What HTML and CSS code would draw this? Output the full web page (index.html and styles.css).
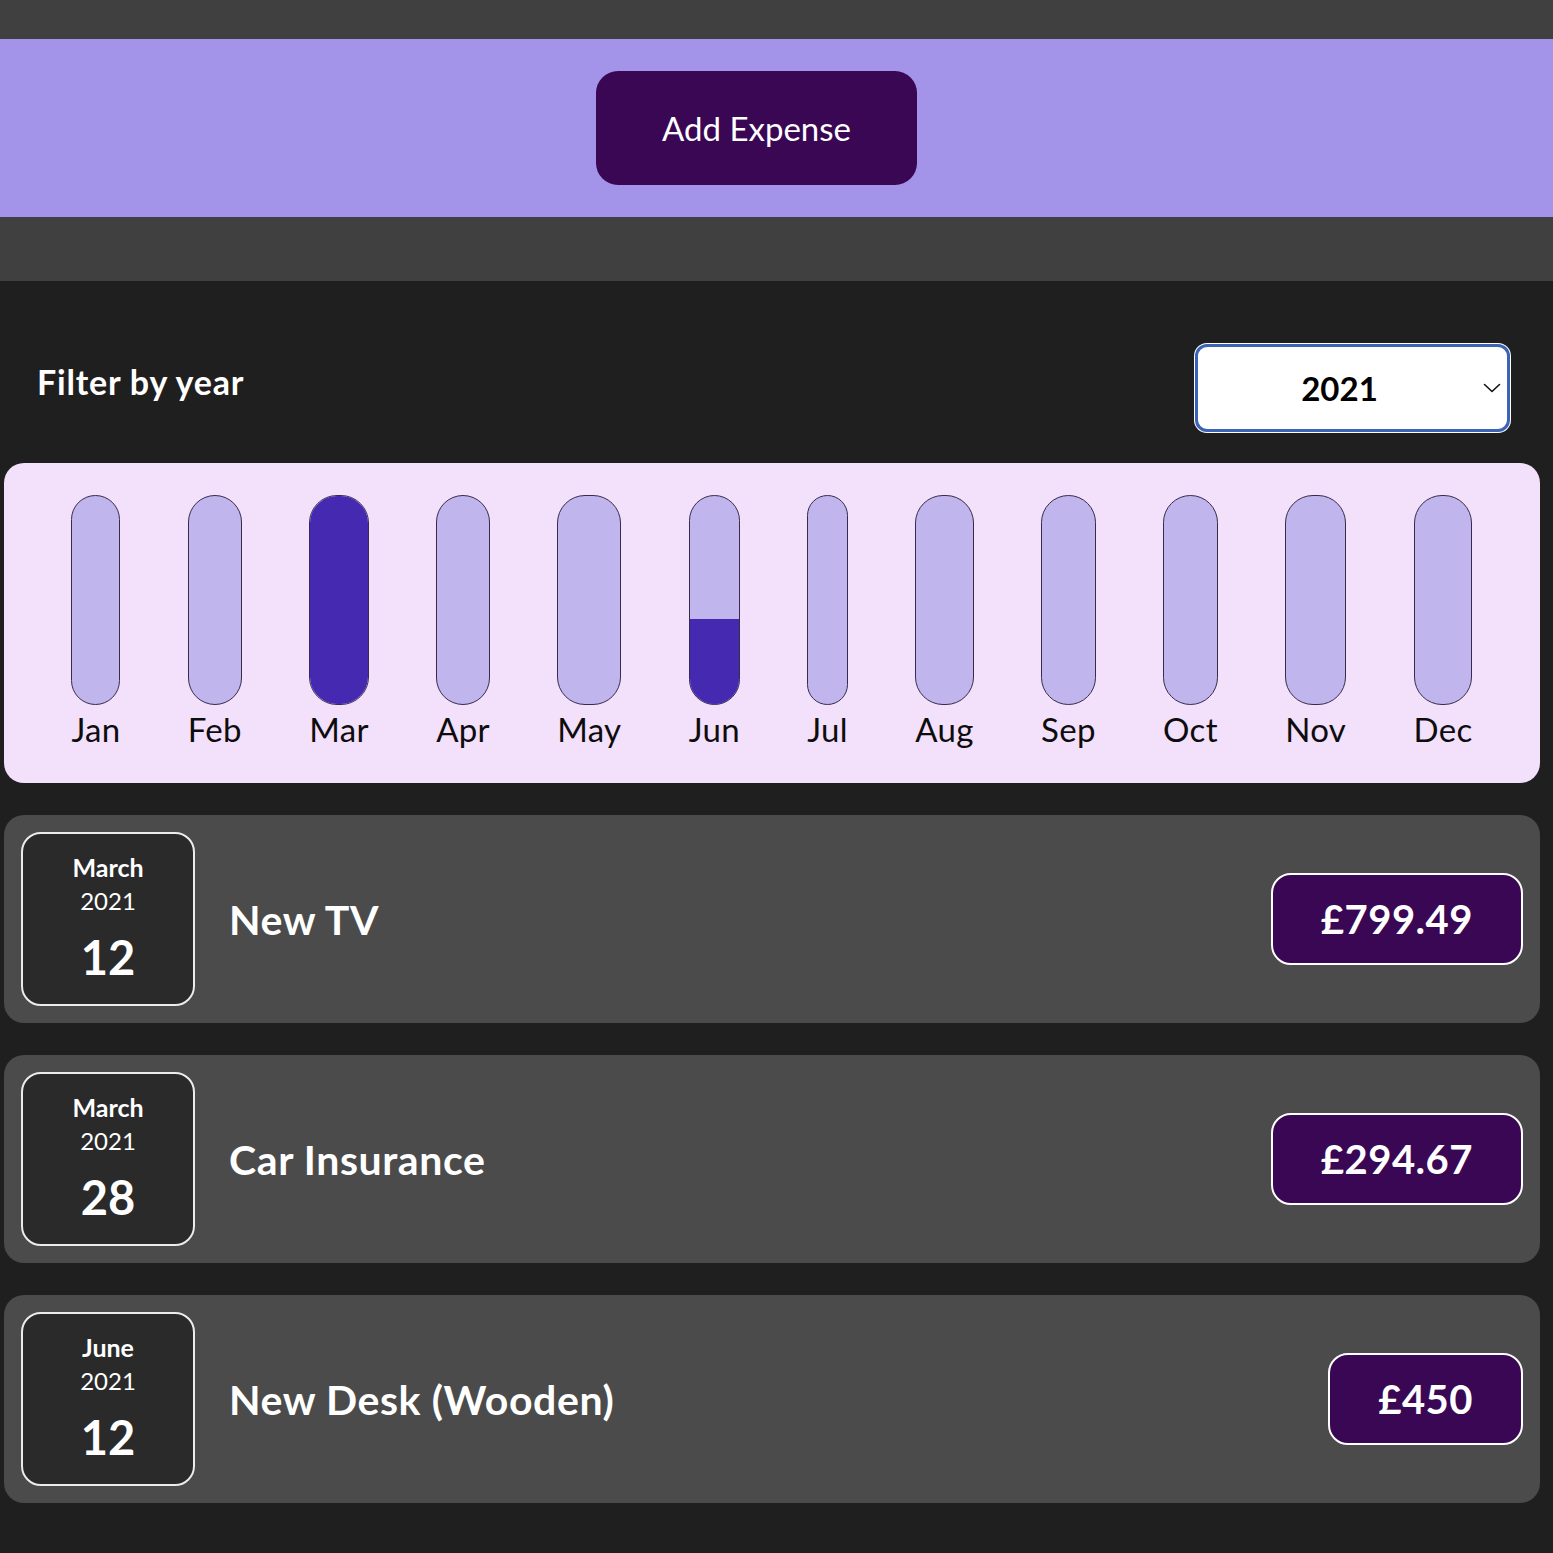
FILE: index.html
```html
<!DOCTYPE html>
<html lang="en">
<head>
<meta charset="utf-8">
<title>Expenses</title>
<link rel="stylesheet" href="styles.css">
</head>
<body>
<header class="top">
  <div class="new-expense">
    <button class="add-btn" type="button">Add Expense</button>
  </div>
</header>
<main class="expenses">
  <div class="filter">
    <label class="filter-label" for="year">Filter by year</label>
    <div class="select-wrap">
      <select id="year" class="year-select">
        <option>2022</option>
        <option selected>2021</option>
        <option>2020</option>
        <option>2019</option>
      </select>
      <svg class="chev" width="18" height="10" viewBox="0 0 18 10" aria-hidden="true"><path d="M1.5 1.5 L9 8.5 L16.5 1.5" fill="none" stroke="#111" stroke-width="1.6" stroke-linecap="round" stroke-linejoin="round"/></svg>
    </div>
  </div>

  <div class="chart">
    <div class="chart-col"><div class="bar"><div class="fill" style="height:0%"></div></div><div class="bar-label">Jan</div></div>
    <div class="chart-col"><div class="bar"><div class="fill" style="height:0%"></div></div><div class="bar-label">Feb</div></div>
    <div class="chart-col"><div class="bar"><div class="fill" style="height:100%"></div></div><div class="bar-label">Mar</div></div>
    <div class="chart-col"><div class="bar"><div class="fill" style="height:0%"></div></div><div class="bar-label">Apr</div></div>
    <div class="chart-col"><div class="bar"><div class="fill" style="height:0%"></div></div><div class="bar-label">May</div></div>
    <div class="chart-col"><div class="bar"><div class="fill" style="height:41%"></div></div><div class="bar-label">Jun</div></div>
    <div class="chart-col"><div class="bar"><div class="fill" style="height:0%"></div></div><div class="bar-label">Jul</div></div>
    <div class="chart-col"><div class="bar"><div class="fill" style="height:0%"></div></div><div class="bar-label">Aug</div></div>
    <div class="chart-col"><div class="bar"><div class="fill" style="height:0%"></div></div><div class="bar-label">Sep</div></div>
    <div class="chart-col"><div class="bar"><div class="fill" style="height:0%"></div></div><div class="bar-label">Oct</div></div>
    <div class="chart-col"><div class="bar"><div class="fill" style="height:0%"></div></div><div class="bar-label">Nov</div></div>
    <div class="chart-col"><div class="bar"><div class="fill" style="height:0%"></div></div><div class="bar-label">Dec</div></div>
  </div>

  <ul class="expense-list">
    <li class="expense-item">
      <div class="date">
        <div class="date-month">March</div>
        <div class="date-year">2021</div>
        <div class="date-day">12</div>
      </div>
      <h2 class="expense-title">New TV</h2>
      <div class="expense-price">£799.49</div>
    </li>
    <li class="expense-item">
      <div class="date">
        <div class="date-month">March</div>
        <div class="date-year">2021</div>
        <div class="date-day">28</div>
      </div>
      <h2 class="expense-title">Car Insurance</h2>
      <div class="expense-price">£294.67</div>
    </li>
    <li class="expense-item">
      <div class="date">
        <div class="date-month">June</div>
        <div class="date-year">2021</div>
        <div class="date-day">12</div>
      </div>
      <h2 class="expense-title">New Desk (Wooden)</h2>
      <div class="expense-price">£450</div>
    </li>
  </ul>
</main>
</body>
</html>
```

FILE: styles.css
```css
* { box-sizing: border-box; }

html, body {
  margin: 0;
  padding: 0;
}

body {
  background: #1f1f1f;
  font-family: Lato, "Open Sans", "Liberation Sans", sans-serif;
  color: #fff;
  min-height: 1553px;
}

.top {
  background: #404040;
  padding: 39px 0 64px;
}

.new-expense {
  background: #a494e9;
  padding: 32px 0;
  display: flex;
  justify-content: center;
}

.add-btn {
  font-family: inherit;
  font-size: 33px;
  line-height: 40px;
  font-weight: 400;
  color: #fff;
  background: #3a0755;
  border: none;
  border-radius: 22px;
  padding: 37px 66px;
  margin-right: 40px;
  cursor: pointer;
}

.expenses {
  width: 1536px;
  margin-left: 4px;
  padding-top: 63px;
}

.filter {
  display: flex;
  justify-content: space-between;
  align-items: center;
  padding: 0 30px 0 33px;
}

.filter-label {
  font-size: 34px;
  font-weight: 700;
  letter-spacing: 0.8px;
  color: #fff;
  padding-bottom: 14px;
}

.select-wrap {
  position: relative;
  width: 315px;
  height: 88px;
}

.year-select {
  appearance: none;
  -webkit-appearance: none;
  width: 100%;
  height: 100%;
  background: #fff;
  border: 3px solid #3b63b6;
  border-radius: 12px;
  box-shadow: 0 0 0 1px #fff;
  font-family: inherit;
  font-size: 33px;
  font-weight: 700;
  color: #000;
  text-align: center;
  text-align-last: center;
  padding: 0 26px 0 0;
  outline: none;
}

.chev {
  position: absolute;
  right: 9px;
  top: 39px;
  pointer-events: none;
}

.chart {
  margin-top: 31px;
  background: #f3e0fb;
  border-radius: 20px;
  padding: 32px 0 34px;
  display: flex;
  justify-content: space-evenly;
}

.chart-col {
  display: flex;
  flex-direction: column;
  align-items: stretch;
}

.bar {
  height: 210px;
  border: 1.5px solid #362c4a;
  border-radius: 28px;
  background: #c1b5ee;
  overflow: hidden;
  display: flex;
  flex-direction: column;
  justify-content: flex-end;
}

.fill {
  background: #4529b0;
  width: 100%;
}

.bar-label {
  margin-top: 4px;
  font-size: 33px;
  line-height: 40px;
  letter-spacing: 0.3px;
  color: #0d0d0d;
  text-align: center;
}

.expense-list {
  list-style: none;
  margin: 32px 0 0;
  padding: 0;
  display: flex;
  flex-direction: column;
  gap: 32px;
}

.expense-item {
  display: flex;
  align-items: center;
  background: #4b4b4b;
  border-radius: 20px;
  padding: 17px;
}

.date {
  width: 174px;
  height: 174px;
  flex: none;
  background: #2a2a2a;
  border: 2px solid #ececec;
  border-radius: 20px;
  display: flex;
  flex-direction: column;
  align-items: center;
  justify-content: center;
  color: #fff;
}

.date-month {
  font-size: 25px;
  font-weight: 700;
  line-height: 34px;
  margin-top: -4px;
}

.date-year {
  font-size: 24px;
  font-weight: 400;
  line-height: 34px;
}

.date-day {
  font-size: 47px;
  font-weight: 700;
  line-height: 56px;
  margin-top: 11px;
}

.expense-title {
  flex: 1;
  margin: 0 0 0 34px;
  font-size: 41px;
  font-weight: 700;
  letter-spacing: 0.6px;
  color: #fff;
}

.expense-price {
  font-size: 40px;
  font-weight: 700;
  line-height: 48px;
  letter-spacing: 0.5px;
  color: #fff;
  background: #3a0755;
  border: 2px solid #fff;
  border-radius: 20px;
  padding: 20px 48px;
}
```
